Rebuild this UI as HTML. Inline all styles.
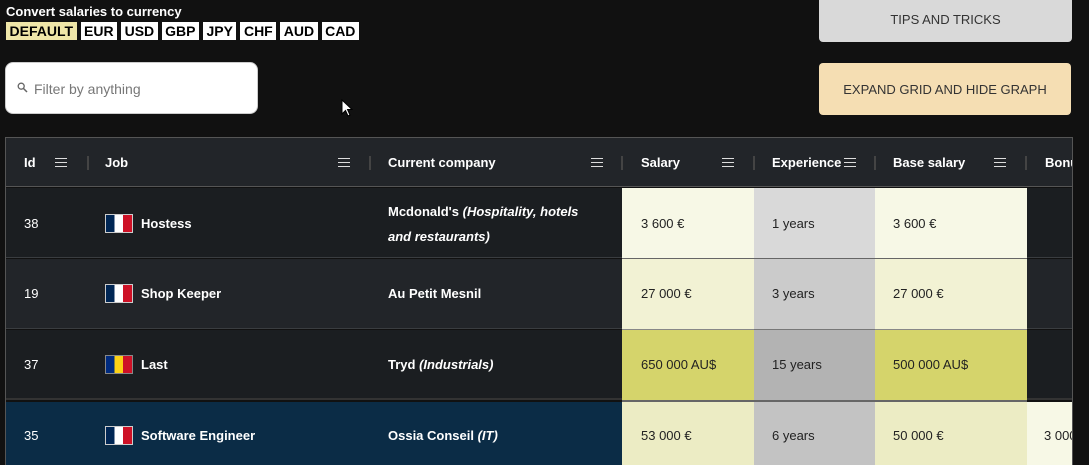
<!DOCTYPE html>
<html><head><style>
*{margin:0;padding:0;box-sizing:border-box}
html,body{width:1089px;height:465px;overflow:hidden}
body{background:#111;font-family:"Liberation Sans",sans-serif;position:relative;color:#fff}
.a{position:absolute}
.t{font-weight:bold;font-size:13px;left:6px;top:4px}
.cur{top:22px;left:6px;display:flex;gap:4px}
.cur span{background:#fff;color:#000;font-weight:bold;font-size:14px;padding:1px 3.5px;height:18px;line-height:17px}
.cur span.d{background:#efe6a8}
.btn{border-radius:4px;color:#333;font-size:13px;display:flex;align-items:center;justify-content:center}
.grid{left:5px;top:137px;width:1068px;height:328px;border:1px solid #555;border-bottom:none;overflow:hidden}
.c{position:absolute;display:flex;align-items:center;font-size:13px}
.h{font-weight:bold;color:#fff}
.menu{position:absolute;width:12px;height:9px;border-top:1.5px solid #ddd;border-bottom:1.5px solid #ddd}
.menu:after{content:"";position:absolute;left:0;right:0;top:2.5px;border-top:1.5px solid #ddd}
.sep{position:absolute;width:2px;height:14px;background:#444;top:18px}
.flag{display:inline-block;width:28px;height:19px;border:1px solid #ccc;margin-right:8px;vertical-align:middle}
.fr{background:linear-gradient(90deg,#002654 33%,#fff 33%,#fff 66%,#ce1126 66%)}
.ro{background:linear-gradient(90deg,#002b7f 33%,#fcd116 33%,#fcd116 66%,#ce1126 66%);border-color:#888}
.dk{color:#222}
</style></head><body>
<div class="a t">Convert salaries to currency</div>
<div class="a cur"><span class="d">DEFAULT</span><span>EUR</span><span>USD</span><span>GBP</span><span>JPY</span><span>CHF</span><span>AUD</span><span>CAD</span></div>
<div class="a" style="left:5px;top:62px;width:253px;height:52px;background:#fff;border-radius:8px;border:1px solid #ccc">
<svg class="a" style="left:11px;top:19px" width="11" height="11" viewBox="0 0 11 11"><circle cx="4.2" cy="4.2" r="3" fill="none" stroke="#666" stroke-width="1.3"/><path d="M6.5 6.5L10 10" stroke="#666" stroke-width="1.5"/></svg>
<span class="a" style="left:28px;top:18px;color:#777;font-size:14px">Filter by anything</span></div>
<svg class="a" style="left:341px;top:99px" width="12" height="18" viewBox="0 0 12 18"><path d="M1 1V15L4.5 11.5L7 17L9 16L6.5 10.5H11Z" fill="#fff" stroke="#000" stroke-width="1"/></svg>
<div class="a btn" style="left:819px;top:-12px;width:253px;height:54px;background:#d9d9d9;padding-top:8px">TIPS AND TRICKS</div>
<div class="a btn" style="left:819px;top:63px;width:252px;height:52px;background:#f5deb3">EXPAND GRID AND HIDE GRAPH</div>

<div class="a grid">
<div class="a" style="left:0;top:0;width:1068px;height:49px;background:#222529;border-bottom:1px solid #555"></div>
<div class="c h" style="left:18px;top:0;height:49px">Id</div><div class="menu" style="left:49px;top:20px"></div><div class="sep" style="left:81px"></div>
<div class="c h" style="left:99px;top:0;height:49px">Job</div><div class="menu" style="left:332px;top:20px"></div><div class="sep" style="left:363px"></div>
<div class="c h" style="left:382px;top:0;height:49px">Current company</div><div class="menu" style="left:585px;top:20px"></div><div class="sep" style="left:615px"></div>
<div class="c h" style="left:635px;top:0;height:49px">Salary</div><div class="menu" style="left:716px;top:20px"></div><div class="sep" style="left:747px"></div>
<div class="c h" style="left:766px;top:0;height:49px">Experience</div><div class="menu" style="left:838px;top:20px"></div><div class="sep" style="left:868px"></div>
<div class="c h" style="left:887px;top:0;height:49px">Base salary</div><div class="menu" style="left:988px;top:20px"></div><div class="sep" style="left:1019px"></div>
<div class="c h" style="left:1039px;top:0;height:49px">Bonus</div>

<div class="a" style="left:0;top:50px;width:1068px;height:70px;background:#1b1e21;border-bottom:1px solid #3a3d40"></div>
<div class="a" style="left:616px;top:50px;width:132px;height:70px;background:#f7f8e6"></div>
<div class="a" style="left:748px;top:50px;width:121px;height:70px;background:#d9d9d9"></div>
<div class="a" style="left:869px;top:50px;width:152px;height:70px;background:#f7f8e6"></div>
<div class="c" style="left:18px;top:50px;height:70px">38</div>
<div class="c h" style="left:99px;top:50px;height:70px"><span class="flag fr"></span>Hostess</div>
<div class="c h" style="left:382px;top:61px;width:210px;line-height:25px;display:block">Mcdonald's <i>(Hospitality, hotels and restaurants)</i></div>
<div class="c dk" style="left:635px;top:50px;height:70px">3 600 €</div>
<div class="c dk" style="left:766px;top:50px;height:70px">1 years</div>
<div class="c dk" style="left:887px;top:50px;height:70px">3 600 €</div>

<div class="a" style="left:0;top:121px;width:1068px;height:70px;background:#222529;border-bottom:1px solid #3a3d40"></div>
<div class="a" style="left:616px;top:120px;width:132px;height:71px;background:#f2f2d4;border-top:1px solid #666"></div>
<div class="a" style="left:748px;top:120px;width:121px;height:71px;background:#cbcbcb;border-top:1px solid #666"></div>
<div class="a" style="left:869px;top:120px;width:152px;height:71px;background:#f2f2d4;border-top:1px solid #666"></div>
<div class="c" style="left:18px;top:120px;height:70px">19</div>
<div class="c h" style="left:99px;top:120px;height:70px"><span class="flag fr"></span>Shop Keeper</div>
<div class="c h" style="left:382px;top:120px;height:70px">Au Petit Mesnil</div>
<div class="c dk" style="left:635px;top:120px;height:70px">27 000 €</div>
<div class="c dk" style="left:766px;top:120px;height:70px">3 years</div>
<div class="c dk" style="left:887px;top:120px;height:70px">27 000 €</div>

<div class="a" style="left:0;top:192px;width:1068px;height:70px;background:#1b1e21;border-bottom:2px solid #333"></div>
<div class="a" style="left:616px;top:191px;width:132px;height:71px;background:#d5d46b;border-top:1px solid #888"></div>
<div class="a" style="left:748px;top:191px;width:121px;height:71px;background:#b3b3b3;border-top:1px solid #777"></div>
<div class="a" style="left:869px;top:191px;width:152px;height:71px;background:#d5d46b;border-top:1px solid #888"></div>
<div class="a" style="left:616px;top:262px;width:405px;height:2px;background:#666"></div>
<div class="c" style="left:18px;top:191px;height:70px">37</div>
<div class="c h" style="left:99px;top:191px;height:70px"><span class="flag ro"></span>Last</div>
<div class="c h" style="left:382px;top:191px;height:70px">Tryd&nbsp;<i>(Industrials)</i></div>
<div class="c dk" style="left:635px;top:191px;height:70px">650 000 AU$</div>
<div class="c dk" style="left:766px;top:191px;height:70px">15 years</div>
<div class="c dk" style="left:887px;top:191px;height:70px">500 000 AU$</div>

<div class="a" style="left:0;top:264px;width:1068px;height:70px;background:#0b2c46"></div>
<div class="a" style="left:616px;top:264px;width:132px;height:70px;background:#ececc4"></div>
<div class="a" style="left:748px;top:264px;width:121px;height:70px;background:#c3c3c3"></div>
<div class="a" style="left:869px;top:264px;width:152px;height:70px;background:#ececc4"></div>
<div class="a" style="left:1021px;top:264px;width:50px;height:70px;background:#f7f8e6"></div>
<div class="c" style="left:18px;top:262px;height:70px">35</div>
<div class="c h" style="left:99px;top:262px;height:70px"><span class="flag fr"></span>Software Engineer</div>
<div class="c h" style="left:382px;top:262px;height:70px">Ossia Conseil&nbsp;<i>(IT)</i></div>
<div class="c dk" style="left:635px;top:262px;height:70px">53 000 €</div>
<div class="c dk" style="left:766px;top:262px;height:70px">6 years</div>
<div class="c dk" style="left:887px;top:262px;height:70px">50 000 €</div>
<div class="c dk" style="left:1038px;top:262px;height:70px;white-space:nowrap">3 000 €</div>
</div>
</body></html>
